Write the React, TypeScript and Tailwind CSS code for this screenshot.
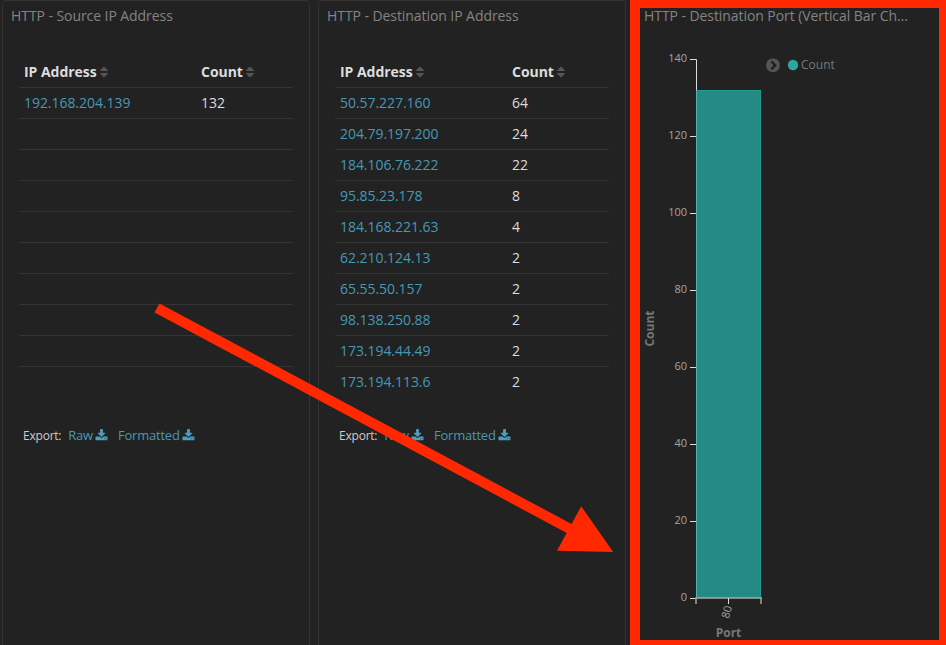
import React from "react";

const FONT = "font-['Open_Sans','Noto_Sans',sans-serif]";

const SortIcon = () => (
  <svg viewBox="0 0 1792 1792" className="ml-0 size-[14px] fill-[#555]">
    <path d="M1408 1088q0 26-19 45l-448 448q-19 19-45 19t-45-19l-448-448q-19-19-19-45t19-45 45-19h896q26 0 45 19t19 45zm0-384q0 26-19 45t-45 19h-896q-26 0-45-19t-19-45 19-45l448-448q19-19 45-19t45 19l448 448q19 19 19 45z" />
  </svg>
);

const DownloadIcon = () => (
  <svg viewBox="0 0 1792 1792" className="mb-[2px] ml-[2px] mr-px size-[13px] fill-[#4a9fc2]">
    <path d="M1344 1344q0-26-19-45t-45-19-45 19-19 45 19 45 45 19 45-19 19-45zm256 0q0-26-19-45t-45-19-45 19-19 45 19 45 45 19 45-19 19-45zm128-224v320q0 40-28 68t-68 28h-1472q-40 0-68-28t-28-68v-320q0-40 28-68t68-28h465l135 136q58 56 136 56t136-56l136-136h464q40 0 68 28t28 68zm-325-569q17 41-14 70l-448 448q-18 19-45 19t-45-19l-448-448q-31-29-14-70 17-39 59-39h256v-448q0-26 19-45t45-19h256q26 0 45 19t19 45v448h256q42 0 59 39z" />
  </svg>
);

type Row = [string, string];

const sourceRows: Row[] = [
  ["192.168.204.139", "132"],
  ...Array.from({ length: 9 }, (): Row => ["", ""]),
];

const destinationRows: Row[] = [
  ["50.57.227.160", "64"],
  ["204.79.197.200", "24"],
  ["184.106.76.222", "22"],
  ["95.85.23.178", "8"],
  ["184.168.221.63", "4"],
  ["62.210.124.13", "2"],
  ["65.55.50.157", "2"],
  ["98.138.250.88", "2"],
  ["173.194.44.49", "2"],
  ["173.194.113.6", "2"],
];

function TablePanel({ title, rows, columns }: { title: string; rows: Row[]; columns: string }) {
  return (
    <section className="flex h-[660px] w-[308px] shrink-0 flex-col rounded border border-[#333]">
      <h2 className="h-[56px] pl-2 pt-[5px] text-sm leading-5 tracking-[-0.07px] text-[#848484]">{title}</h2>
      <div className="mx-4 flex flex-col text-sm">
        <div className={`grid h-[30px] items-center pl-[5px] font-bold tracking-[-0.03px] text-[#ddd] ${columns}`}>
          <span className="flex items-center">IP Address<SortIcon /></span>
          <span className="flex items-center">Count<SortIcon /></span>
        </div>
        {rows.map(([ip, count], i) => (
          <div key={i} className={`grid h-[31px] items-center border-t border-[#343434] pl-[5px] ${columns}`}>
            <span className="tracking-[-0.05px] text-[#4698b7]">{ip}</span>
            <span className="text-[#ddd]">{count}</span>
          </div>
        ))}
      </div>
      <div className="mt-[27px] flex h-6 items-center pl-5 text-[13px] tracking-[-0.22px] text-[#4698b7]">
        <span className="mr-[7px] text-xs text-[#ccc]">Export:</span>
        <a className="mr-[9px] flex items-center">Raw<DownloadIcon /></a>
        <a className="flex items-center">Formatted<DownloadIcon /></a>
      </div>
    </section>
  );
}

const ticks = [0, 20, 40, 60, 80, 100, 120, 140];

function BarChart() {
  return (
    <svg viewBox="640 28 299 612" className={`h-[612px] w-[299px] ${FONT}`}>
      <rect x="696" y="90" width="65" height="508" fill="#238b83" />
      <path d="M696.5 598V90M760.5 90V598M696 90.5h65" fill="none" stroke="#209b91" />
      <path d="M690 59.5h6.5V90" fill="none" stroke="#ddd" />
      <path d="M696.5 90V598" stroke="#54b3aa" />
      {ticks.map((t) => {
        const y = 598 - t * 3.85;
        return (
          <g key={t}>
            <path d={`M690 ${Math.floor(y) + 0.5}h6`} stroke="#ddd" />
            <text x="687" y={y + 3.3} textAnchor="end" fontSize="11" fill="#a4a4a4">{t}</text>
          </g>
        );
      })}
      <path d="M695 598h67" stroke="#aaa" strokeWidth="1.5" />
      <path d="M696 598v6M761 598v6" stroke="#999" strokeWidth="1.6" />
      <path d="M728.5 598v6" stroke="#ddd" />
      <text transform="translate(730.5 613) rotate(-75)" textAnchor="middle" fontSize="11" fill="#a4a4a4">80</text>
      <text x="728.5" y="637" textAnchor="middle" fontSize="12" fontWeight="bold" fill="#777">Port</text>
      <text transform="translate(654 328.5) rotate(-90)" textAnchor="middle" fontSize="12" fontWeight="bold" fill="#777">Count</text>
      <g transform="translate(765 57.3) scale(.0089286)" fill="#555">
        <path d="M845 1395l454-454q19-19 19-45t-19-45l-454-454q-19-19-45-19t-45 19l-102 102q-19 19-19 45t19 45l307 307-307 307q-19 19-19 45t19 45l102 102q19 19 45 19t45-19zm819-499q0 209-103 385.5t-279.5 279.5-385.5 103-385.5-103-279.5-279.5-103-385.5 103-385.5 279.5-279.5 385.5-103 385.5 103 279.5 279.5 103 385.5z" />
      </g>
      <circle cx="793" cy="65" r="5.2" fill="#2aa89d" />
      <text x="801" y="69.3" fontSize="12" fill="#777">Count</text>
    </svg>
  );
}

export default function App() {
  return (
    <main className={`relative flex h-[645px] w-[946px] overflow-hidden bg-[#222] pl-[2px] ${FONT}`}>
      <TablePanel title="HTTP - Source IP Address" rows={sourceRows} columns="grid-cols-[177px_1fr]" />
      <div className="ml-2 flex">
        <TablePanel title="HTTP - Destination IP Address" rows={destinationRows} columns="grid-cols-[172px_1fr]" />
      </div>
      <section className="ml-1 flex h-[645px] w-[316px] shrink-0 flex-col border-b-[5px] border-l-[10px] border-r-[7px] border-t-[8px] border-[#ff2800]">
        <h2 className="h-5 pl-1 text-sm leading-[15px] tracking-[-0.07px] text-[#848484]">HTTP - Destination Port (Vertical Bar Ch...</h2>
        <BarChart />
      </section>
      <svg viewBox="0 0 946 645" className="pointer-events-none absolute inset-0 size-full">
        <path d="M157 307.9L572 530" stroke="#ff2800" strokeWidth="10.2" />
        <path d="M581.2 506.3L613.2 552L557 550.7Z" fill="#ff2800" />
      </svg>
    </main>
  );
}
